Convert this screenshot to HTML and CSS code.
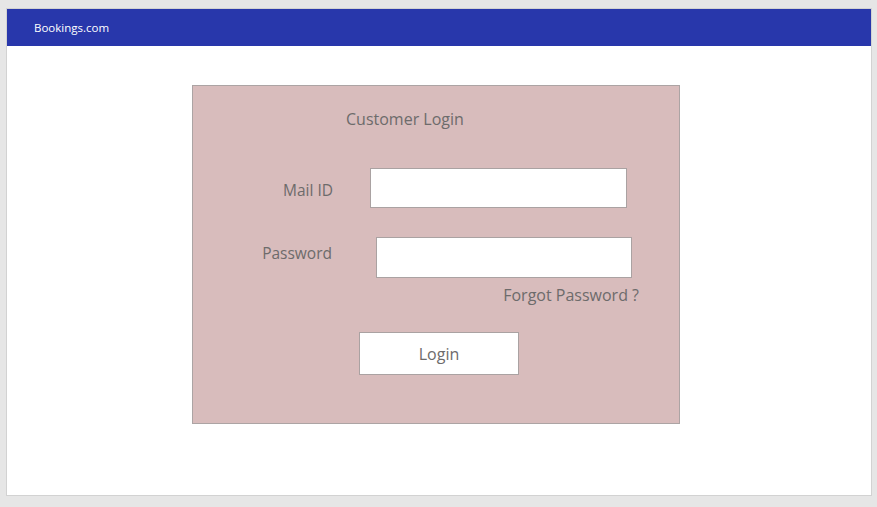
FILE: index.html
```html
<!DOCTYPE html>
<html lang="en">
<head>
<meta charset="utf-8">
<title>Bookings.com - Customer Login</title>
<link rel="stylesheet" href="styles.css">
</head>
<body>
  <div class="frame">
    <header class="topbar">
      <span class="brand">Bookings.com</span>
    </header>
    <main class="content">
      <form class="card">
        <h1 class="title">Customer Login</h1>
        <div class="row row-mail">
          <label class="label">Mail ID</label>
          <input class="field field-mail" type="text">
        </div>
        <div class="row row-pass">
          <label class="label">Password</label>
          <input class="field field-pass" type="password">
        </div>
        <div class="forgot-row">
          <a class="forgot">Forgot Password ?</a>
        </div>
        <div class="btn-row">
          <button class="login-btn" type="button">Login</button>
        </div>
      </form>
    </main>
  </div>
</body>
</html>
```

FILE: styles.css
```css
* { box-sizing: border-box; }
html, body { height: 100%; }
body {
  margin: 0;
  padding: 8px 5px 12px 6px;
  background: #e6e6e6;
  font-family: "Open Sans", "Noto Sans", sans-serif;
}
.frame {
  height: 488px;
  background: #ffffff;
  border: 1px solid #d2d2d2;
  display: flex;
  flex-direction: column;
}
.topbar {
  height: 37px;
  background: #2837ab;
  display: flex;
  align-items: center;
  padding-left: 27px;
}
.brand {
  color: #ffffff;
  font-size: 11.5px;
}
.content {
  padding: 39px 0 0 185px;
}
.card {
  width: 488px;
  height: 339px;
  background: #d8bcbc;
  border: 1px solid #aca4a4;
  color: #6d6b6b;
  margin: 0;
}
.title {
  margin: 0;
  padding: 21px 0 0 153px;
  font-size: 16px;
  font-weight: normal;
  line-height: 24px;
}
.row {
  display: flex;
  align-items: center;
}
.label {
  font-size: 15.5px;
  text-align: right;
}
.field {
  display: block;
  background: #ffffff;
  border: 1px solid #aaa2a2;
  padding: 0;
  margin: 0;
  outline: none;
}
.row-mail { margin-top: 37px; }
.row-mail .label { width: 140px; margin-top: 3px; }
.field-mail { width: 257px; height: 40px; margin-left: 37px; }
.row-pass { margin-top: 29px; align-items: flex-start; }
.row-pass .label { width: 139px; margin-top: 5px; }
.field-pass { width: 256px; height: 41px; margin-left: 44px; }
.forgot-row {
  display: flex;
  justify-content: flex-end;
  width: 446px;
  margin-top: 5px;
}
.forgot {
  font-size: 16px;
  line-height: 24px;
  color: #6d6b6b;
}
.btn-row {
  padding-left: 166px;
  margin-top: 25px;
}
.login-btn {
  width: 160px;
  height: 43px;
  background: #ffffff;
  border: 1px solid #aaa2a2;
  font-family: inherit;
  font-size: 16px;
  color: #6d6b6b;
  padding: 0;
}
```
